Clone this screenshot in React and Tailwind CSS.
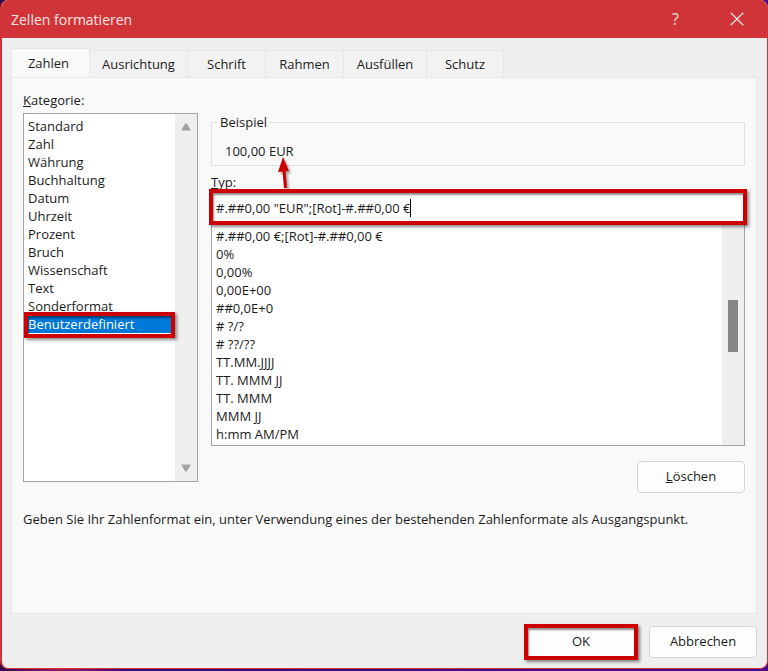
import { useState } from 'react';

const tabs = [
  { name: 'Ausrichtung', width: 'w-[98px]' },
  { name: 'Schrift', width: 'w-[78px]' },
  { name: 'Rahmen', width: 'w-[78px]' },
  { name: 'Ausfüllen', width: 'w-[83px]' },
  { name: 'Schutz', width: 'w-[77px]' },
];

const categories = [
  'Standard', 'Zahl', 'Währung', 'Buchhaltung', 'Datum', 'Uhrzeit',
  'Prozent', 'Bruch', 'Wissenschaft', 'Text', 'Sonderformat', 'Benutzerdefiniert',
];

const formats = [
  '#.##0,00 €;[Rot]-#.##0,00 €', '0%', '0,00%', '0,00E+00', '##0,0E+0', '# ?/?',
  '# ??/??', 'TT.MM.JJJJ', 'TT. MMM JJ', 'TT. MMM', 'MMM JJ', 'h:mm AM/PM',
];

// red frame that points out a control
function Marker({ className }) {
  return (
    <div
      className={`pointer-events-none absolute border-4 border-[#cc0000] shadow-[2px_2px_3px_rgba(0,0,0,0.45),inset_1px_2px_2px_rgba(0,0,0,0.45)] ${className}`}
    />
  );
}

function TitleBar() {
  return (
    <header className="flex h-[38px] items-center bg-[#d13438] pl-[9px] text-[#fbe4e4]">
      <h1 className="flex-1 text-[14px]">Zellen formatieren</h1>
      <button type="button" aria-label="Hilfe" className="w-[61px] text-center text-[16px]">?</button>
      <button type="button" aria-label="Schließen" className="flex h-full w-[61px] items-center justify-center">
        <svg width="14" height="14" viewBox="0 0 14 14" stroke="currentColor" strokeWidth="1.3" fill="none">
          <path d="M0.7 0.7 13.3 13.3M13.3 0.7 0.7 13.3" />
        </svg>
      </button>
    </header>
  );
}

function Tabs() {
  return (
    <div role="tablist" className="flex items-end">
      <button type="button" role="tab" aria-selected="true" className="-mb-px h-[30px] w-[79px] border border-b-0 border-[#e6e6e6] bg-[#f9f9f9] pr-1">
        Zahlen
      </button>
      {tabs.map((tab) => (
        <button
          key={tab.name}
          type="button"
          role="tab"
          aria-selected="false"
          className={`h-[27px] border-t border-r border-[#e6e6e6] bg-[#f2f2f2] pt-[2px] ${tab.width}`}
        >
          {tab.name}
        </button>
      ))}
    </div>
  );
}

function Categories() {
  const [category, setCategory] = useState('Benutzerdefiniert');

  return (
    <div className="w-[175px]">
      <label htmlFor="kategorie" className="mb-[3px] block h-5 leading-5"><u>K</u>ategorie:</label>
      <div className="relative flex h-[369px] border border-[#a0a4aa] bg-white">
        <select
          id="kategorie"
          size={12}
          value={category}
          onChange={(e) => setCategory(e.target.value)}
          className="min-w-0 flex-1 appearance-none overflow-hidden pt-[3px] outline-none [scrollbar-width:none]"
        >
          {categories.map((name) => (
            <option
              key={name}
              className="h-[18px] min-h-0 p-0 pl-1 leading-[18px] checked:bg-[linear-gradient(#0078d7,#0078d7)] checked:text-white"
            >
              {name}
            </option>
          ))}
        </select>
        <div className="flex w-[22px] flex-col items-center justify-between bg-[#efefef] py-2 text-[#a3a3a3]">
          <svg width="10" height="10" viewBox="0 0 10 10" fill="currentColor"><path d="M4.2 1.5h1.6L10 8.5H0z" /></svg>
          <svg width="10" height="10" viewBox="0 0 10 10" fill="currentColor"><path d="M4.2 8.5h1.6L10 1.5H0z" /></svg>
        </div>
        <Marker className="top-[198px] left-0 h-[26px] w-[151px]" />
      </div>
    </div>
  );
}

function Arrow() {
  return (
    <svg
      className="pointer-events-none absolute top-[44px] left-[66px] drop-shadow-[2px_2px_1px_rgba(0,0,0,0.35)]"
      width="14"
      height="32"
      viewBox="0 0 14 32"
    >
      <path d="M7 14 8.5 31" stroke="#cc0000" strokeWidth="3" />
      <path d="M6 0 12 14 1 15z" fill="#cc0000" />
    </svg>
  );
}

function FormatEditor() {
  const [format, setFormat] = useState('#.##0,00 "EUR";[Rot]-#.##0,00 €');

  return (
    <div className="relative min-w-0 flex-1 pt-[23px]">
      <div className="relative">
        <fieldset className="border border-[#e0e0e0]">
          <legend className="ml-[5px] px-[3px] leading-[18px]">Beispiel</legend>
          <p className="pt-[10px] pb-1 pl-[13px] leading-5">100,00 EUR</p>
        </fieldset>
        <Arrow />
      </div>

      <label htmlFor="typ" className="mt-[7px] block leading-[18px]"><u>T</u>yp:</label>
      <div className="relative flex h-[34px] items-center bg-white pl-[5px]">
        <input
          id="typ"
          value={format}
          onChange={(e) => setFormat(e.target.value)}
          className="field-sizing-content bg-transparent leading-5 outline-none"
        />
        <span className="h-[18px] w-px bg-black" />
        <Marker className="-inset-x-[2px] -top-[2px] bottom-0" />
      </div>

      <div className="flex h-[221px] border border-t-0 border-[#a0a4aa] bg-white">
        <select
          size={12}
          aria-label="Zahlenformate"
          className="min-w-0 flex-1 appearance-none overflow-hidden pt-[2px] outline-none [scrollbar-width:none]"
        >
          {formats.map((name) => (
            <option key={name} className="h-[18px] min-h-0 p-0 pl-1 leading-[18px]">{name}</option>
          ))}
        </select>
        <div className="w-[22px] bg-[#efefef] pt-[75px]">
          <div className="mx-auto h-[52px] w-[10px] bg-[#868686]" />
        </div>
      </div>

      <div className="mt-[15px] flex justify-end">
        <DialogButton><u>L</u>öschen</DialogButton>
      </div>
    </div>
  );
}

function DialogButton({ children }) {
  return (
    <button type="button" className="h-8 w-[108px] rounded border border-[#d4d4d4] bg-[#fdfdfd]">
      {children}
    </button>
  );
}

export default function App() {
  return (
    <div className="flex min-h-screen flex-col bg-[linear-gradient(90deg,#2a0a52,#a01850_8%,#3a0a80_16%,#4a0a90)] pb-[2px] font-['Open_Sans',sans-serif] text-[13px] text-[#1c1c1c]">
      <main className="flex flex-1 flex-col overflow-hidden rounded-lg border border-t-0 border-l-2 border-[#d13438] bg-[#efefef]">
        <TitleBar />

        <div className="flex flex-1 flex-col pt-[10px] pr-[10px] pl-[9px]">
          <Tabs />
          <section className="flex-1 border border-[#e6e6e6] bg-[#f9f9f9] px-[11px] pt-3">
            <div className="flex gap-[13px]">
              <Categories />
              <FormatEditor />
            </div>
            <p className="mt-4 leading-5">
              Geben Sie Ihr Zahlenformat ein, unter Verwendung eines der bestehenden Zahlenformate als Ausgangspunkt.
            </p>
          </section>

          <footer className="flex justify-end gap-[14px] pt-3 pb-[10px]">
            <div className="relative">
              <DialogButton>OK</DialogButton>
              <Marker className="-inset-x-[3px] -inset-y-[2px]" />
            </div>
            <DialogButton>Abbrechen</DialogButton>
          </footer>
        </div>
      </main>
    </div>
  );
}
